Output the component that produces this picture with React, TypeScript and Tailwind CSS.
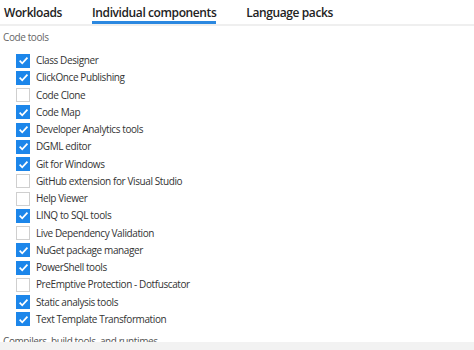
import React from 'react';

const items: [string, boolean][] = [
  ['Class Designer', true],
  ['ClickOnce Publishing', true],
  ['Code Clone', false],
  ['Code Map', true],
  ['Developer Analytics tools', true],
  ['DGML editor', true],
  ['Git for Windows', true],
  ['GitHub extension for Visual Studio', false],
  ['Help Viewer', false],
  ['LINQ to SQL tools', true],
  ['Live Dependency Validation', false],
  ['NuGet package manager', true],
  ['PowerShell tools', true],
  ['PreEmptive Protection - Dotfuscator', false],
  ['Static analysis tools', true],
  ['Text Template Transformation', true],
];

const Box: React.FC<{ on: boolean }> = ({ on }) =>
  on ? (
    <span className="w-[14px] h-[14px] bg-[#1c86ea] flex items-center justify-center shrink-0">
      <svg width="11" height="11" viewBox="0 0 12 12" fill="none">
        <path d="M1.8 6.2 L4.6 9 L10.3 2.8" stroke="white" strokeWidth="1.9" />
      </svg>
    </span>
  ) : (
    <span className="w-[14px] h-[14px] border border-[#cfcfcf] bg-white shrink-0" />
  );

export default function App() {
  return (
    <div className="w-[474px] h-[350px] bg-white overflow-hidden flex flex-col" style={{ fontFamily: '"Open Sans", "Noto Sans", sans-serif' }}>
      <div className="flex h-[26px] border-b-2 border-[#efefef] text-[12px] tracking-[-0.4px] font-semibold text-[#222]">
        <div className="pl-[4px] pt-[4px]">Workloads</div>
        <div className="ml-[30px] pt-[4px] relative">
          Individual components
          <div className="absolute left-0 right-0 top-[21px] h-[3px] bg-[#2b88e0]" />
        </div>
        <div className="ml-[30px] pt-[4px]">Language packs</div>
      </div>
      <div className="flex-1 overflow-hidden text-[10px] tracking-[-0.4px]">
        <div className="pl-[3px] pt-[4px] text-[#666] h-[25px]">Code tools</div>
        <div className="pl-[16px] pt-[1px]">
          {items.map(([label, on]) => (
            <div key={label} className="flex items-center h-[17.25px] gap-[6px] text-[#333]">
              <Box on={on} />
              <span>{label}</span>
            </div>
          ))}
        </div>
        <div className="pl-[3px] pt-[6px] text-[#555]">Compilers, build tools, and runtimes</div>
      </div>
      <div className="h-[8px] bg-[#f2f2f2] shrink-0" />
    </div>
  );
}
